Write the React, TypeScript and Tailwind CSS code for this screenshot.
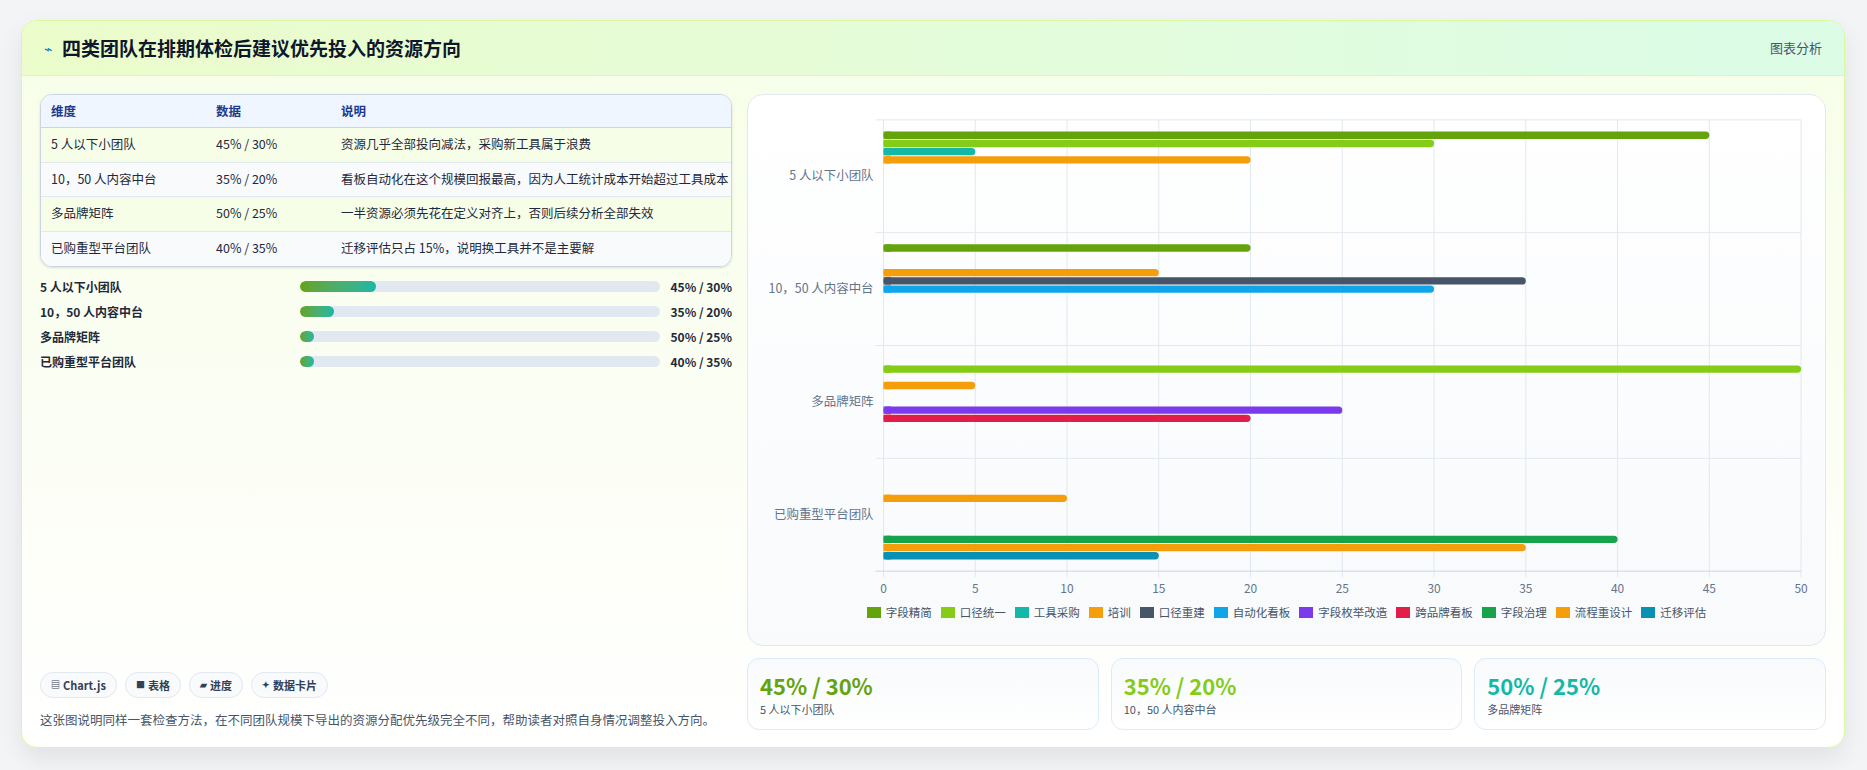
import React from "react";

const FONT = '"Noto Sans CJK SC", "Noto Sans", sans-serif';

const datasets = [
  { name: "字段精简", color: "#65a30d" },
  { name: "口径统一", color: "#84cc16" },
  { name: "工具采购", color: "#14b8a6" },
  { name: "培训", color: "#f59e0b" },
  { name: "口径重建", color: "#475569" },
  { name: "自动化看板", color: "#0ea5e9" },
  { name: "字段枚举改造", color: "#7c3aed" },
  { name: "跨品牌看板", color: "#e11d48" },
  { name: "字段治理", color: "#16a34a" },
  { name: "流程重设计", color: "#f59e0b" },
  { name: "迁移评估", color: "#0891b2" },
];

const groups = [
  { label: "5 人以下小团队", vals: { 0: 45, 1: 30, 2: 5, 3: 20 } as Record<number, number> },
  { label: "10，50 人内容中台", vals: { 0: 20, 3: 15, 4: 35, 5: 30 } as Record<number, number> },
  { label: "多品牌矩阵", vals: { 1: 50, 3: 5, 6: 25, 7: 20 } as Record<number, number> },
  { label: "已购重型平台团队", vals: { 3: 10, 8: 40, 9: 35, 10: 15 } as Record<number, number> },
];

const rows = [
  ["5 人以下小团队", "45% / 30%", "资源几乎全部投向减法，采购新工具属于浪费"],
  ["10，50 人内容中台", "35% / 20%", "看板自动化在这个规模回报最高，因为人工统计成本开始超过工具成本"],
  ["多品牌矩阵", "50% / 25%", "一半资源必须先花在定义对齐上，否则后续分析全部失效"],
  ["已购重型平台团队", "40% / 35%", "迁移评估只占 15%，说明换工具并不是主要解"],
];

const progress = [
  ["5 人以下小团队", "45% / 30%", 21],
  ["10，50 人内容中台", "35% / 20%", 9.5],
  ["多品牌矩阵", "50% / 25%", 3.8],
  ["已购重型平台团队", "40% / 35%", 3.8],
] as const;

function Chart() {
  const x0 = 136, x1 = 1057, top = 24, bottom = 477;
  const unit = (x1 - x0) / 50;
  const band = (bottom - top) / 4;
  const slot = (band * 0.8) / 11;
  const bh = slot * 0.9;
  return (
    <svg width="100%" height="505" viewBox="0 0 1081 505" style={{ fontFamily: FONT }}>
      {[0, 5, 10, 15, 20, 25, 30, 35, 40, 45, 50].map((t) => (
        <g key={t}>
          <line x1={x0 + t * unit} x2={x0 + t * unit} y1={top} y2={bottom + 6} stroke="#e2e8f0" strokeWidth="1" />
          <text x={x0 + t * unit} y={bottom + 22} textAnchor="middle" fontSize="12" fill="#64748b">{t}</text>
        </g>
      ))}
      {[0, 1, 2, 3].map((i) => (
        <line key={i} x1={x0 - 8} x2={x1} y1={top + i * band} y2={top + i * band} stroke="#e2e8f0" strokeWidth="1" />
      ))}
      <line x1={x0 - 8} x2={x1} y1={bottom} y2={bottom} stroke="#cbd5e1" strokeWidth="1" />
      {groups.map((g, gi) => {
        const bandTop = top + gi * band;
        return (
          <g key={gi}>
            <text x={x0 - 10} y={bandTop + band / 2 + 4} textAnchor="end" fontSize="12.5" fill="#64748b">{g.label}</text>
            {Object.entries(g.vals).map(([k, v]) => {
              const i = Number(k);
              const cy = bandTop + band * 0.1 + (i + 0.5) * slot;
              const w = v * unit;
              return (
                <rect key={k} x={x0} y={cy - bh / 2} width={w} height={bh} rx={bh / 2} fill={datasets[i].color} />
              );
            })}
            {Object.entries(g.vals).map(([k, v]) => {
              const i = Number(k);
              const cy = bandTop + band * 0.1 + (i + 0.5) * slot;
              return <rect key={"s" + k} x={x0} y={cy - bh / 2} width={Math.min(v * unit, bh)} height={bh} fill={datasets[i].color} />;
            })}
          </g>
        );
      })}
    </svg>
  );
}

export default function App() {
  return (
    <div className="w-[1867px] h-[770px] bg-[#f3f4f6] pt-[20px] pl-[21px]" style={{ fontFamily: FONT }}>
      <div className="w-[1824px] h-[728px] rounded-2xl border border-[#d9f99d] bg-gradient-to-b from-[#f7fee7] to-white shadow-[0_10px_25px_rgba(0,0,0,0.08)] overflow-hidden flex flex-col">
        <div className="h-[55px] shrink-0 flex items-center justify-between px-[22px] bg-gradient-to-r from-[#ecfccb] to-[#dcfce7] border-b border-[#dbeafe]">
          <div className="flex items-center gap-[10px]">
            <span className="text-[14px] text-[#0284c7]">⌁</span>
            <span className="text-[19px] font-bold text-[#0f172a]">四类团队在排期体检后建议优先投入的资源方向</span>
          </div>
          <span className="text-[13px] text-[#475569]">图表分析</span>
        </div>
        <div className="flex-1 flex gap-[15px] px-[18px] pt-[18px] pb-[19px]">
          <div className="w-[692px] shrink-0 flex flex-col justify-between">
            <div>
              <div className="rounded-xl border border-[#cbd5e1] overflow-hidden text-[12.5px] shadow-sm">
                <div className="flex h-[33px] items-center bg-[#eff6ff] text-[#1e3a8a] font-semibold border-b border-[#cbd5e1]">
                  <div className="w-[175px] pl-[10px]">维度</div>
                  <div className="w-[125px]">数据</div>
                  <div className="flex-1">说明</div>
                </div>
                {rows.map((r, i) => (
                  <div key={i} className={`flex h-[34.5px] items-center text-[#1e293b] ${i < 3 ? "border-b border-[#e2e8f0]" : ""} ${i % 2 === 0 ? "bg-[#f7fee7]" : "bg-[#f8fafc]"}`}>
                    <div className="w-[175px] pl-[10px]">{r[0]}</div>
                    <div className="w-[125px]">{r[1]}</div>
                    <div className="flex-1 whitespace-nowrap">{r[2]}</div>
                  </div>
                ))}
              </div>
              <div className="mt-[10px] flex flex-col gap-[6px]">
                {progress.map(([l, v, p]) => (
                  <div key={l} className="flex items-center h-[19px] text-[12px] font-semibold text-[#1e293b]">
                    <div className="w-[260px]">{l}</div>
                    <div className="w-[360px] h-[11px] rounded-full bg-[#e2e8f0] overflow-hidden">
                      <div className="h-full rounded-full bg-gradient-to-r from-[#65a30d] to-[#14b8a6]" style={{ width: `${p}%` }} />
                    </div>
                    <div className="flex-1 text-right">{v}</div>
                  </div>
                ))}
              </div>
            </div>
            <div>
              <div className="flex gap-[8px]">
                {[["▤", "Chart.js"], ["■", "表格"], ["▰", "进度"], ["✦", "数据卡片"]].map(([ic, t]) => (
                  <span key={t} className="h-[26px] px-[10px] rounded-full border border-[#e2e8f0] bg-[#f8fafc] flex items-center gap-[3px] text-[11px] font-semibold text-[#334155]">
                    <span className="text-[9px]">{ic}</span>{t}
                  </span>
                ))}
              </div>
              <p className="mt-[11px] text-[12.5px] leading-[21px] text-[#475569]">
                这张图说明同样一套检查方法，在不同团队规模下导出的资源分配优先级完全不同，帮助读者对照自身情况调整投入方向。
              </p>
            </div>
          </div>
          <div className="flex-1 flex flex-col gap-[12px]">
            <div className="h-[552px] rounded-2xl border border-[#e2e8f0] bg-gradient-to-b from-white to-[#f8fafc]">
              <Chart />
              <div className="flex justify-center gap-[9px] text-[11.5px] text-[#475569] mt-[4px]">
                {datasets.map((d) => (
                  <div key={d.name} className="flex items-center gap-[5px]">
                    <span className="w-[14px] h-[11px]" style={{ background: d.color }} />
                    {d.name}
                  </div>
                ))}
              </div>
            </div>
            <div className="flex gap-[12px] h-[72px]">
              {[["45% / 30%", "5 人以下小团队", "#65a30d"], ["35% / 20%", "10，50 人内容中台", "#84cc16"], ["50% / 25%", "多品牌矩阵", "#14b8a6"]].map(([v, l, c]) => (
                <div key={l} className="flex-1 rounded-xl border border-[#dbeafe] bg-gradient-to-b from-[#f8fafc] to-white px-[12px] flex flex-col justify-center">
                  <div className="text-[22px] font-bold leading-[28px]" style={{ color: c }}>{v}</div>
                  <div className="text-[11px] text-[#475569] mt-[2px]">{l}</div>
                </div>
              ))}
            </div>
          </div>
        </div>
      </div>
    </div>
  );
}
